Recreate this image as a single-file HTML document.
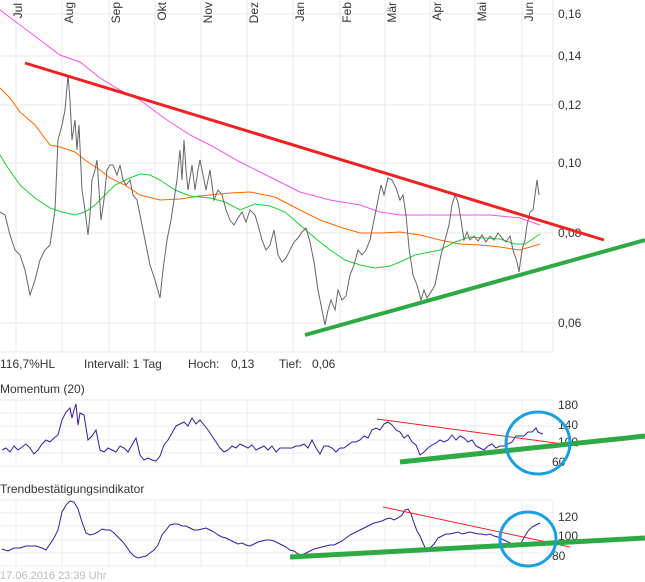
<!DOCTYPE html>
<html><head><meta charset="utf-8"><style>
body{margin:0;background:#fff;width:645px;height:582px;overflow:hidden;font-family:"Liberation Sans",sans-serif}
svg{position:absolute;left:0;top:0}
</style></head><body>
<svg width="645" height="582" viewBox="0 0 645 582" font-family="Liberation Sans, sans-serif">
<g stroke="#e8e8e8" stroke-width="1">
<line x1="16" y1="0" x2="16" y2="352"/><line x1="62" y1="0" x2="62" y2="352"/><line x1="109" y1="0" x2="109" y2="352"/><line x1="155" y1="0" x2="155" y2="352"/><line x1="201" y1="0" x2="201" y2="352"/><line x1="247" y1="0" x2="247" y2="352"/><line x1="293" y1="0" x2="293" y2="352"/><line x1="340" y1="0" x2="340" y2="352"/><line x1="385" y1="0" x2="385" y2="352"/><line x1="430" y1="0" x2="430" y2="352"/><line x1="475" y1="0" x2="475" y2="352"/><line x1="522" y1="0" x2="522" y2="352"/><line x1="553" y1="0" x2="553" y2="352"/>
<line x1="0" y1="14" x2="553" y2="14"/><line x1="0" y1="56" x2="553" y2="56"/><line x1="0" y1="105" x2="553" y2="105"/><line x1="0" y1="163" x2="553" y2="163"/><line x1="0" y1="233" x2="553" y2="233"/><line x1="0" y1="323" x2="553" y2="323"/><line x1="0" y1="352" x2="553" y2="352"/>
</g>
<g stroke="#ececec">
<line x1="0" y1="400" x2="553" y2="400"/><line x1="0" y1="413" x2="553" y2="413"/><line x1="0" y1="426" x2="553" y2="426"/><line x1="0" y1="440" x2="553" y2="440"/><line x1="0" y1="453" x2="553" y2="453"/><line x1="0" y1="466" x2="553" y2="466"/>
<line x1="0" y1="500" x2="553" y2="500"/><line x1="0" y1="513" x2="553" y2="513"/><line x1="0" y1="526" x2="553" y2="526"/><line x1="0" y1="540" x2="553" y2="540"/><line x1="0" y1="553" x2="553" y2="553"/><line x1="0" y1="566" x2="553" y2="566"/>
<path d="M16 400V466M62 400V466M109 400V466M155 400V466M201 400V466M247 400V466M293 400V466M340 400V466M385 400V466M430 400V466M475 400V466M522 400V466M553 400V466M16 500V566M62 500V566M109 500V566M155 500V566M201 500V566M247 500V566M293 500V566M340 500V566M385 500V566M430 500V566M475 500V566M522 500V566M553 500V566"/>
</g>
<g font-size="12" fill="#333">
<g transform="translate(22,3) rotate(-90)"><text text-anchor="end" x="0" y="0">Jul</text></g>
<text transform="translate(73,2) rotate(-90)" text-anchor="end">Aug</text>
<text transform="translate(120,2) rotate(-90)" text-anchor="end">Sep</text>
<text transform="translate(166,2) rotate(-90)" text-anchor="end">Okt</text>
<text transform="translate(212,2) rotate(-90)" text-anchor="end">Nov</text>
<text transform="translate(258,2) rotate(-90)" text-anchor="end">Dez</text>
<text transform="translate(304,2) rotate(-90)" text-anchor="end">Jan</text>
<text transform="translate(351,2) rotate(-90)" text-anchor="end">Feb</text>
<text transform="translate(396,2) rotate(-90)" text-anchor="end">Mär</text>
<text transform="translate(441,2) rotate(-90)" text-anchor="end">Apr</text>
<text transform="translate(486,2) rotate(-90)" text-anchor="end">Mai</text>
<text transform="translate(533,2) rotate(-90)" text-anchor="end">Jun</text>
<text x="558" y="18">0,16</text><text x="558" y="60">0,14</text><text x="558" y="109">0,12</text><text x="558" y="167">0,10</text><text x="558" y="237">0,08</text><text x="558" y="327">0,06</text>
<text x="0" y="368">116,7%HL</text><text x="84" y="368">Intervall: 1 Tag</text><text x="188" y="368">Hoch:</text><text x="231" y="368">0,13</text><text x="279" y="368">Tief:</text><text x="312" y="368">0,06</text>
<text x="0" y="393">Momentum (20)</text>
<text x="0" y="493">Trendbestätigungsindikator</text>
<text x="558" y="409">180</text><text x="558" y="429">140</text><text x="558" y="446">100</text><text x="552" y="466">60</text>
<text x="558" y="521">120</text><text x="558" y="540">100</text><text x="552" y="560">80</text>
<text x="0" y="579" fill="#bbb" font-size="11">17.06.2016 23:39 Uhr</text>
</g>
<g fill="none" stroke-width="1">
<polyline stroke="#ee55ee" points="0,10 20,25 40,40 60,55 80,62 100,78 120,90 140,100 160,115 170,122 190,135 210,145 240,162 260,172 280,182 300,192 330,200 360,205 380,212 400,215 430,215 460,215 490,215 520,218 540,225"/>
<polyline stroke="#ff6600" points="0,88 10,98 20,112 35,125 50,145 60,147 75,152 85,160 100,170 110,178 125,185 140,195 160,200 180,199 200,196 230,193 250,192 260,194 275,197 300,210 320,220 340,227 360,233 380,233 400,232 420,235 440,240 460,244 480,245 500,247 520,250 540,244"/>
<polyline stroke="#22cc33" points="0,155 8,168 20,185 35,198 50,208 62,212 75,215 85,212 95,205 105,195 115,185 130,178 140,174 150,175 160,180 175,190 190,196 210,198 225,202 240,210 255,204 270,206 285,212 300,225 315,238 330,250 345,260 360,265 375,268 390,266 400,262 415,255 430,252 440,250 455,242 470,237 485,238 500,239 515,244 525,244 540,234"/>
<polyline stroke="#666" points="0,212 5,215 10,235 15,250 20,255 25,270 30,295 35,280 40,260 45,250 50,245 55,210 58,140 62,125 65,110 68,75 70,100 72,140 75,120 77,150 79,125 82,190 85,210 88,235 90,215 92,180 95,170 97,160 99,190 101,220 104,200 107,170 110,165 113,165 117,175 120,165 123,180 126,185 130,180 133,195 137,200 140,215 145,240 150,265 155,280 160,298 163,270 167,240 171,220 174,200 177,180 180,150 182,180 184,140 186,170 188,190 192,165 195,190 198,170 200,160 203,175 206,190 210,170 214,200 218,190 222,195 226,210 230,220 234,225 238,218 242,212 246,222 250,210 255,215 258,225 262,240 266,250 270,245 274,230 278,255 282,262 286,258 290,250 294,242 298,238 302,232 306,228 310,242 314,262 318,290 322,310 325,325 328,310 331,300 335,310 338,290 342,300 346,296 350,275 354,265 358,250 362,255 366,250 370,240 374,220 378,200 381,185 384,195 388,178 392,180 396,188 400,200 403,195 406,215 409,248 413,275 417,285 421,300 424,290 427,298 431,292 435,285 438,270 441,255 445,240 449,225 452,205 455,195 458,202 461,220 464,240 467,232 470,240 474,236 478,241 482,235 486,242 490,236 494,240 498,233 502,238 506,242 510,236 513,250 517,262 519,272 522,250 525,240 527,225 530,212 533,210 535,195 537,180 539,195"/>
<line x1="25" y1="63" x2="604" y2="240" stroke="#ee2222" stroke-width="3"/>
<line x1="305" y1="335" x2="645" y2="240" stroke="#2eaa44" stroke-width="4"/>
<polyline stroke="#3a1aa0" points="2,450 6,448 10,452 14,446 18,450 22,447 26,444 30,448 34,454 38,450 42,444 46,440 50,442 54,438 58,435 62,420 66,412 70,408 72,418 74,410 76,404 78,425 80,413 84,415 88,440 92,436 96,430 100,450 104,452 108,448 112,450 116,452 120,446 124,448 128,452 132,445 136,438 140,455 144,460 148,458 152,460 156,461 160,456 164,445 168,440 172,433 176,426 180,424 184,422 188,426 192,418 196,424 200,420 204,425 208,430 212,436 216,442 220,448 224,452 228,450 232,446 236,448 240,444 244,446 248,448 252,445 256,450 260,448 264,446 268,450 272,446 276,452 280,448 284,448 288,448 292,448 296,446 300,446 304,444 308,448 312,440 316,448 320,454 324,446 328,446 332,448 336,452 340,448 344,448 348,445 352,442 356,442 360,440 364,436 368,438 372,430 376,428 380,430 384,424 388,422 392,425 396,430 400,432 404,438 408,435 412,442 416,445 420,455 424,452 428,448 432,445 436,443 440,440 444,442 448,440 452,435 456,440 460,436 464,438 468,442 472,440 476,446 480,448 484,450 488,446 492,444 496,448 500,446 504,446 508,444 512,442 516,436 520,436 524,436 528,432 532,432 534,430 536,428 538,432 540,433 543,434"/>
<line x1="377" y1="419" x2="578" y2="446" stroke="#ee2222"/>
<line x1="400" y1="462" x2="645" y2="436" stroke="#2eaa44" stroke-width="5"/>
<ellipse cx="538" cy="443" rx="32" ry="31" stroke="#1a9ee0" stroke-width="3"/>
<polyline stroke="#3a1aa0" points="2,549 8,551 14,548 20,548 26,546 32,546 36,546 42,548 46,550 50,544 54,538 58,530 62,512 66,505 70,501 74,502 78,509 82,522 86,533 90,535 94,534 98,532 102,529 106,530 110,530 114,533 118,537 122,541 126,546 130,552 134,556 138,558 142,557 146,556 150,553 154,550 158,545 162,535 166,530 170,525 174,524 178,524 182,526 186,526 190,528 194,530 198,530 202,529 206,528 210,530 214,532 218,535 222,537 226,538 230,540 234,542 238,544 242,543 246,545 250,546 254,544 258,542 262,541 266,540 270,540 274,541 278,543 282,545 286,547 290,550 294,551 298,554 302,555 306,553 310,551 314,549 318,548 322,547 326,546 330,545 334,545 338,543 342,541 346,538 350,535 354,533 358,531 362,529 366,527 370,525 374,523 378,522 382,521 386,519 390,518 394,520 398,518 402,515 405,510 408,509 411,514 414,523 417,531 420,536 423,543 426,550 430,548 434,544 438,538 442,536 446,534 450,534 454,533 458,532 462,534 466,533 470,532 474,533 478,534 482,534 486,535 490,534 494,536 498,537 502,539 506,541 510,543 514,545 518,546 521,543 525,536 528,531 532,527 536,525 540,523"/>
<line x1="383" y1="507" x2="570" y2="547" stroke="#ee2222"/>
<line x1="290" y1="557" x2="645" y2="538" stroke="#2eaa44" stroke-width="5"/>
<ellipse cx="528" cy="539" rx="28" ry="27" stroke="#1a9ee0" stroke-width="3"/>
</g>
</svg>
</body></html>
